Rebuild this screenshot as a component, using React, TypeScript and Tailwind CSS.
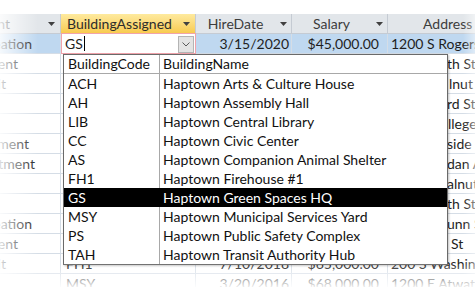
import React from 'react';

type GridRow = {
    dept: string;
    deptEnd?: string;
    building?: string;
    hire?: string;
    salary?: string;
    address: string;
    addressPad: string;
    selected?: boolean;
};

const gridRows: GridRow[] = [
    { dept: 'Parks & Recreation', deptEnd: 'w-[32px]', hire: '3/15/2020', salary: '$45,000.00', address: '1200 S Rogers St', addressPad: 'pl-[3px]', selected: true },
    { dept: 'Fire Department', deptEnd: 'w-[18px]', address: 'th St', addressPad: 'pl-[59px]' },
    { dept: 'Transit', deptEnd: 'w-[6px]', address: 'lnut St', addressPad: 'pl-[61px]' },
    { dept: '', address: 'rd St', addressPad: 'pl-[59px]' },
    { dept: '', address: 'llege Ave', addressPad: 'pl-[60px]' },
    { dept: 'Planning Department', deptEnd: 'w-[29px]', address: 'side Dr', addressPad: 'pl-[59px]' },
    { dept: 'Public Works Department', deptEnd: 'w-[35px]', address: 'dan Ave', addressPad: 'pl-[59px]' },
    { dept: '', address: 'alnut St', addressPad: 'pl-[59px]' },
    { dept: '', address: 'th St', addressPad: 'pl-[59px]' },
    { dept: 'Parks & Recreation', deptEnd: 'w-[32px]', address: 'unn St', addressPad: 'pl-[59px]' },
    { dept: 'Fire Department', deptEnd: 'w-[18px]', address: 'St', addressPad: 'pl-[63px]' },
    { dept: 'Transit', deptEnd: 'w-[6px]', building: 'FH1', hire: '7/10/2018', salary: '$65,000.00', address: '200 S Washington St', addressPad: 'pl-[3px]' },
    { dept: '', building: 'MSY', hire: '3/20/2016', salary: '$68,000.00', address: '1200 E Atwater Ave', addressPad: 'pl-[3px]' },
];

const buildings = [
    ['ACH', 'Haptown Arts & Culture House'],
    ['AH', 'Haptown Assembly Hall'],
    ['LIB', 'Haptown Central Library'],
    ['CC', 'Haptown Civic Center'],
    ['AS', 'Haptown Companion Animal Shelter'],
    ['FH1', 'Haptown Firehouse #1'],
    ['GS', 'Haptown Green Spaces HQ'],
    ['MSY', 'Haptown Municipal Services Yard'],
    ['PS', 'Haptown Public Safety Complex'],
    ['TAH', 'Haptown Transit Authority Hub'],
];

const SortArrow = () => (
    <svg width="7" height="4" viewBox="0 0 7 4" className="shrink-0">
        <path d="M0 0H7L3.5 4Z" fill="#404040" />
    </svg>
);

const HeaderCell = ({ label, className }: { label: string; className: string }) => (
    <div className={`flex items-center h-full border-r border-[#c5cbd3] ${className}`}>
        <span className="flex-1 text-center whitespace-nowrap">{label}</span>
        <span className="w-[16px] flex justify-center">
            <SortArrow />
        </span>
    </div>
);

const App = () => {
    return (
        <div
            className="relative w-[475px] h-[287px] overflow-hidden bg-white text-[14px] text-[#1e1e1e]"
            style={{ fontFamily: 'Lato, "Open Sans", sans-serif' }}
        >
            <div className="h-[14px]" />

            {/* column headers */}
            <div className="flex h-[20px] border-b border-[#c5cbd3] bg-[#e2e6ea] text-[#3c3c3c] leading-[19px]">
                <div className="w-[61px] shrink-0 flex items-center border-r border-[#c5cbd3]">
                    <div className="w-[10px] shrink-0 flex justify-end">
                        <span className="whitespace-nowrap shrink-0">Department</span>
                    </div>
                    <span className="ml-auto mr-[5px]">
                        <SortArrow />
                    </span>
                </div>
                <div className="w-[135px] shrink-0 flex items-center h-full border-r border-[#c5cbd3] bg-gradient-to-b from-[#feea9e] to-[#f8cb4e] text-[#2c2c2c]">
                    <span className="pl-[6px] whitespace-nowrap">BuildingAssigned</span>
                    <span className="ml-auto mr-[5px]">
                        <SortArrow />
                    </span>
                </div>
                <HeaderCell label="HireDate" className="w-[96px] shrink-0" />
                <HeaderCell label="Salary" className="w-[96px] shrink-0" />
                <div className="flex-1 flex items-center pl-[35px] whitespace-nowrap">Address</div>
            </div>

            {/* records */}
            {gridRows.map((row, i) => (
                <div
                    key={i}
                    className={`flex h-[20px] leading-[19px] border-b border-[#d5dde6] ${row.selected ? 'bg-[#bfd8f0]' : 'bg-white'}`}
                >
                    <div className="w-[61px] shrink-0 flex border-r border-[#d5dde6]">
                        {row.deptEnd && (
                            <div className={`shrink-0 flex justify-end ${row.deptEnd}`}>
                                <span className="whitespace-nowrap shrink-0">{row.dept}</span>
                            </div>
                        )}
                    </div>
                    {row.selected ? (
                        <div className="relative w-[135px] shrink-0 -mt-px h-[21px] flex items-center bg-white border border-[#f1a3ab]">
                            <span className="pl-[3px]">GS</span>
                            <span className="ml-[1px] w-px h-[15px] bg-black" />
                            <div className="absolute right-[1px] top-[2px] w-[16px] h-[17px] flex items-center justify-center bg-[#e3e3e3] border border-[#b4b4b4]">
                                <svg width="8" height="5" viewBox="0 0 8 5">
                                    <path d="M0.5 0.5L4 4L7.5 0.5" fill="none" stroke="#5a5a5a" strokeWidth="1" />
                                </svg>
                            </div>
                        </div>
                    ) : (
                        <div className="w-[135px] shrink-0 border-r border-[#d5dde6] pl-[5px] whitespace-nowrap">
                            {row.building}
                        </div>
                    )}
                    <div className="w-[96px] shrink-0 border-r border-[#d5dde6] text-right pr-[2px] whitespace-nowrap">
                        {row.hire}
                    </div>
                    <div className="w-[96px] shrink-0 border-r border-[#d5dde6] text-right pr-[8px] whitespace-nowrap">
                        {row.salary}
                    </div>
                    <div className={`flex-1 whitespace-nowrap overflow-hidden ${row.addressPad}`}>{row.address}</div>
                </div>
            ))}

            {/* lookup list */}
            <div className="absolute left-[63px] top-[54px] w-[385px] h-[211px] bg-white border border-[#6a6a6a] shadow-[1px_1px_2px_rgba(0,0,0,0.25)] text-[#111] leading-[19px]">
                <div className="flex h-[19px] border-b border-[#a8a8a8]">
                    <div className="w-[96px] shrink-0 border-r border-[#a8a8a8] pl-[4px] leading-[18px]">BuildingCode</div>
                    <div className="flex-1 pl-[3px] leading-[18px]">BuildingName</div>
                </div>
                {buildings.map(([code, name]) => {
                    const active = code === 'GS';
                    return (
                        <div key={code} className={`flex h-[19px] ${active ? 'bg-black text-white' : ''}`}>
                            <div className={`w-[96px] shrink-0 pl-[4px] border-r ${active ? 'border-black' : 'border-[#a8a8a8]'}`}>
                                {code}
                            </div>
                            <div className="flex-1 pl-[3px] whitespace-nowrap">{name}</div>
                        </div>
                    );
                })}
            </div>

            {/* faded edges of the capture */}
            <div className="pointer-events-none absolute left-0 top-0 bottom-0 w-[38px] bg-gradient-to-r from-white/85 to-white/0" />
            <div className="pointer-events-none absolute right-0 top-0 bottom-0 w-[12px] bg-gradient-to-l from-white/50 to-white/0" />
            <div className="pointer-events-none absolute left-0 right-0 bottom-0 h-[24px] bg-gradient-to-t from-white/90 to-white/0" />
        </div>
    );
};

export default App;
